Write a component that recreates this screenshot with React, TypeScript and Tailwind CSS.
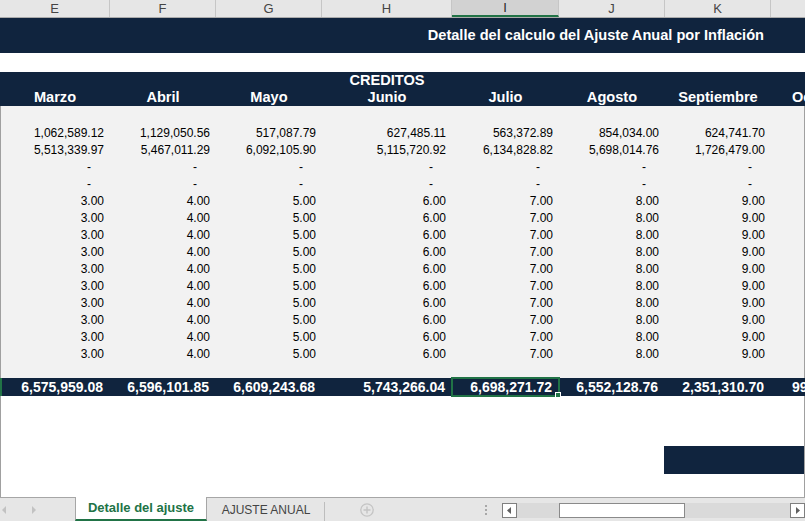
import React from 'react';

type Col = {
  key: string;
  w: string;
  month: string;
  a: string;
  b: string;
  dash: boolean;
  v: string;
  total: string;
};

const cols: Col[] = [
  { key: 'E', w: 'w-[110px]', month: 'Marzo', a: '1,062,589.12', b: '5,513,339.97', dash: true, v: '3.00', total: '6,575,959.08' },
  { key: 'F', w: 'w-[106px]', month: 'Abril', a: '1,129,050.56', b: '5,467,011.29', dash: true, v: '4.00', total: '6,596,101.85' },
  { key: 'G', w: 'w-[106px]', month: 'Mayo', a: '517,087.79', b: '6,092,105.90', dash: true, v: '5.00', total: '6,609,243.68' },
  { key: 'H', w: 'w-[130px]', month: 'Junio', a: '627,485.11', b: '5,115,720.92', dash: true, v: '6.00', total: '5,743,266.04' },
  { key: 'I', w: 'w-[107px]', month: 'Julio', a: '563,372.89', b: '6,134,828.82', dash: true, v: '7.00', total: '6,698,271.72' },
  { key: 'J', w: 'w-[106px]', month: 'Agosto', a: '854,034.00', b: '5,698,014.76', dash: true, v: '8.00', total: '6,552,128.76' },
  { key: 'K', w: 'w-[106px]', month: 'Septiembre', a: '624,741.70', b: '1,726,479.00', dash: true, v: '9.00', total: '2,351,310.70' },
  { key: 'L', w: 'w-[98px]', month: 'Octubre', a: '58,214.36', b: '47,903.81', dash: true, v: '10.00', total: '995,652.07' },
];

const navy = 'bg-[#10243e]';

function DataRow({ pick }: { pick: (c: Col) => string }) {
  return (
    <div className="flex h-[17px] items-center">
      {cols.map((c) => {
        const val = pick(c);
        const isDash = val === '-';
        return (
          <div
            key={c.key}
            className={`${c.w} shrink-0 text-right text-[12px] leading-[17px] text-black ${isDash ? 'pr-[20px]' : 'pr-[7px]'}`}
          >
            {val}
          </div>
        );
      })}
    </div>
  );
}

export default function App() {
  const rows: ((c: Col) => string)[] = [
    (c) => c.a,
    (c) => c.b,
    () => '-',
    () => '-',
    ...Array.from({ length: 10 }, () => (c: Col) => c.v),
  ];

  return (
    <div className="w-[805px] h-[521px] overflow-hidden flex flex-col bg-white font-['Liberation_Sans',Arial,sans-serif]">
      {/* column headers */}
      <div className="flex h-[18px] shrink-0 bg-[#e6e6e6] border-b border-[#ababab]">
        {cols.map((c) => (
          <div
            key={c.key}
            className={`${c.w} shrink-0 flex items-center justify-center text-[13px] border-r border-[#c6c6c6] ${
              c.key === 'I' ? 'bg-[#d2d2d2] border-b-2 border-b-[#217346] text-[#262626]' : 'text-[#444]'
            }`}
          >
            {c.key}
          </div>
        ))}
      </div>

      {/* title */}
      <div className={`${navy} h-[35px] shrink-0 flex items-center`}>
        <div className="w-[771px] pr-[7px] text-right text-white font-bold text-[14.6px]">
          Detalle del calculo del Ajuste Anual por Inflación
        </div>
      </div>

      <div className="h-[19px] shrink-0 bg-white" />

      {/* months */}
      <div className={`${navy} h-[34px] shrink-0 flex flex-col text-white font-bold text-[14.6px]`}>
        <div className="flex h-[17px] items-center">
          <div className="w-[322px] shrink-0" />
          <div className="w-[130px] shrink-0 text-center leading-[17px]">CREDITOS</div>
        </div>
        <div className="flex h-[17px] items-center">
          {cols.map((c) => (
            <div key={c.key} className={`${c.w} shrink-0 text-center leading-[17px] whitespace-nowrap overflow-hidden`}>
              {c.month}
            </div>
          ))}
        </div>
      </div>

      {/* data block */}
      <div className="h-[272px] shrink-0 bg-[#f2f2f2] border-l border-r border-[#a0a0a0] flex flex-col overflow-hidden">
        <div className="h-[19px] shrink-0" />
        {rows.map((pick, i) => (
          <DataRow key={i} pick={pick} />
        ))}
      </div>

      {/* totals */}
      <div className={`${navy} h-[18px] shrink-0 flex items-center border-l-2 border-[#217346]`}>
        {cols.map((c, i) => (
          <div
            key={c.key}
            className={`${i === 0 ? 'w-[108px]' : c.w} shrink-0 relative h-[18px] text-right pr-[7px] text-white font-bold text-[14px] leading-[18px] whitespace-nowrap`}
          >
            {c.total}
            {c.key === 'I' && (
              <>
                <div className="absolute -top-[1px] -left-[1px] -right-[1px] -bottom-[1px] border-2 border-[#217346]" />
                <div className="absolute -right-[2px] -bottom-[2px] w-[6px] h-[6px] bg-[#217346] border border-white" />
              </>
            )}
          </div>
        ))}
      </div>

      {/* blank sheet area */}
      <div className="h-[50px] shrink-0 border-l border-r border-[#a0a0a0]" />
      <div className="h-[28px] shrink-0 flex border-l border-r border-[#a0a0a0]">
        <div className="w-[663px] shrink-0" />
        <div className={`${navy} flex-1`} />
      </div>
      <div className="h-[23px] shrink-0 border-l border-r border-[#a0a0a0]" />

      {/* sheet tabs */}
      <div className="h-[24px] shrink-0 flex bg-[#e6e6e6] border-t border-[#a6a6a6] text-[13px]">
        <div className="w-[75px] shrink-0 flex items-center">
          <svg width="6" height="8" viewBox="0 0 6 8" className="ml-[1px]">
            <path d="M5 0 L1 4 L5 8 Z" fill="#c2c2c2" />
          </svg>
          <svg width="6" height="8" viewBox="0 0 6 8" className="ml-[24px]">
            <path d="M1 0 L5 4 L1 8 Z" fill="#c2c2c2" />
          </svg>
        </div>
        <div className="w-[132px] shrink-0 -mt-[1px] bg-white border-x border-[#a6a6a6] border-b-2 border-b-[#217346] flex items-center justify-center font-bold text-[#217346]">
          Detalle del ajuste
        </div>
        <div className="w-[117px] shrink-0 flex items-center justify-center text-[12px] text-[#444]">
          <span className="ml-[1px]">AJUSTE ANUAL</span>
        </div>
        <div className="w-px h-[19px] mt-[4px] bg-[#bdbdbd]" />
        <div className="w-[84px] shrink-0 flex items-center justify-center">
          <svg width="14" height="14" viewBox="0 0 14 14">
            <circle cx="7" cy="7" r="6.2" fill="none" stroke="#c4c4c4" strokeWidth="1.3" />
            <path d="M7 3.5 V10.5 M3.5 7 H10.5" stroke="#c4c4c4" strokeWidth="1.4" />
          </svg>
        </div>
        <div className="w-[93px] shrink-0 flex items-center justify-end pr-[15px]">
          <div className="flex flex-col gap-[2px]">
            <div className="w-[2px] h-[2px] bg-[#a8a8a8]" />
            <div className="w-[2px] h-[2px] bg-[#a8a8a8]" />
            <div className="w-[2px] h-[2px] bg-[#a8a8a8]" />
          </div>
        </div>
        <div className="flex-1 flex items-center pt-[2px]">
          <div className="w-[15px] h-[15px] shrink-0 bg-white border border-[#7f7f7f] flex items-center justify-center">
            <svg width="5" height="7" viewBox="0 0 5 7">
              <path d="M4 0 L0 3.5 L4 7 Z" fill="#606060" />
            </svg>
          </div>
          <div className="flex-1 h-[15px] bg-[#dadada] flex items-center">
            <div className="ml-[42px] w-[126px] h-[15px] bg-white border border-[#8a8a8a]" />
          </div>
          <div className="w-[15px] h-[15px] shrink-0 bg-white border border-[#7f7f7f] flex items-center justify-center">
            <svg width="5" height="7" viewBox="0 0 5 7">
              <path d="M1 0 L5 3.5 L1 7 Z" fill="#606060" />
            </svg>
          </div>
        </div>
      </div>
    </div>
  );
}
